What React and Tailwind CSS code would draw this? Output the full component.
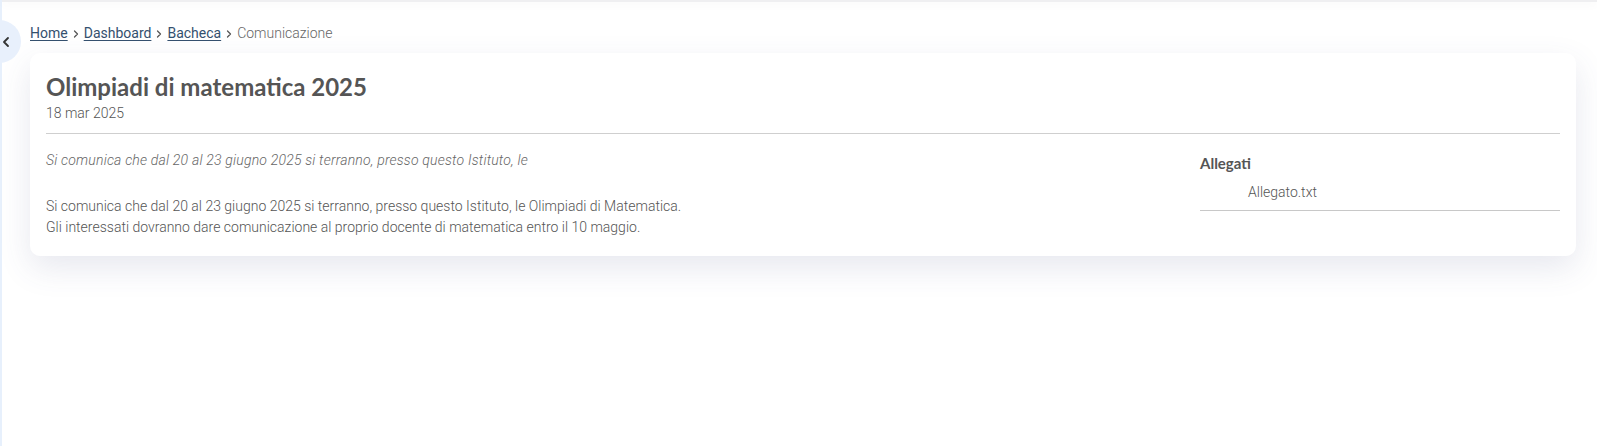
import { ChevronLeft, ChevronRight } from 'lucide-react';

const roboto = { fontFamily: 'Roboto, "Liberation Sans", sans-serif' };
const lato = { fontFamily: 'Lato, "Liberation Sans", sans-serif' };

const Sep = () => <ChevronRight className="w-3 h-3 mx-[2px] text-[#555]" strokeWidth={2.5} />;

const Breadcrumb = () => (
  <nav className="flex items-center text-[14px] font-light text-[#666]" style={roboto}>
    <a className="text-[#34506e] underline underline-offset-2 font-normal">Home</a>
    <Sep />
    <a className="text-[#34506e] underline underline-offset-2 font-normal">Dashboard</a>
    <Sep />
    <a className="text-[#34506e] underline underline-offset-2 font-normal">Bacheca</a>
    <Sep />
    <span className="text-[#666]">Comunicazione</span>
  </nav>
);

export default function App() {
  return (
    <div className="relative min-h-[446px] bg-white flex">
      {/* Sidebar collassata */}
      <div className="w-[2px] bg-[#e7f0fc] min-h-[446px]"></div>
      <button className="absolute left-[-22px] top-[20px] w-[43px] h-[43px] rounded-full bg-[#e8f0fc] flex items-center justify-end pr-[7px]">
        <ChevronLeft className="w-4 h-4 text-[#333]" strokeWidth={2.75} />
      </button>

      <div className="flex-1 flex flex-col">
        {/* Ombra header */}
        <div className="h-[2px] bg-[#efeff1] shadow-[0_2px_8px_rgba(0,0,0,0.07)]"></div>

        <div className="pl-[28px] pr-[21px] pt-[21px]">
          <Breadcrumb />

          <div className="mt-[9px] bg-white rounded-[10px] shadow-[0_12px_32px_rgba(70,80,130,0.13)] px-4 pt-[19px] pb-[18px]">
            <h1 className="text-[24px] font-bold text-[#555] leading-[30px]" style={lato}>
              Olimpiadi di matematica 2025
            </h1>
            <p className="text-[14px] font-light text-[#555] leading-[20px] mt-[1px]" style={roboto}>18 mar 2025</p>

            <hr className="mt-[10px] border-t border-[#cfcfcf]" />

            <div className="flex mt-[16px]" style={roboto}>
              <div className="flex-1 text-[14px] font-light text-[#555] leading-[21px]">
                <p className="italic text-[#666] tracking-[0.2px]">Si comunica che dal 20 al 23 giugno 2025 si terranno, presso questo Istituto, le</p>
                <p className="mt-[25px]">Si comunica che dal 20 al 23 giugno 2025 si terranno, presso questo Istituto, le Olimpiadi di Matematica.</p>
                <p>Gli interessati dovranno dare comunicazione al proprio docente di matematica entro il 10 maggio.</p>
              </div>
              <div className="w-[360px]">
                <h3 className="text-[15px] font-bold text-[#555] leading-[20px] mt-[3px]" style={lato}>Allegati</h3>
                <div className="pl-[48px] pt-[9px] pb-[8px] text-[14px] font-light text-[#555] leading-[20px] border-b border-[#c8c8c8]">
                  Allegato.txt
                </div>
              </div>
            </div>
          </div>
        </div>
      </div>
    </div>
  );
}
